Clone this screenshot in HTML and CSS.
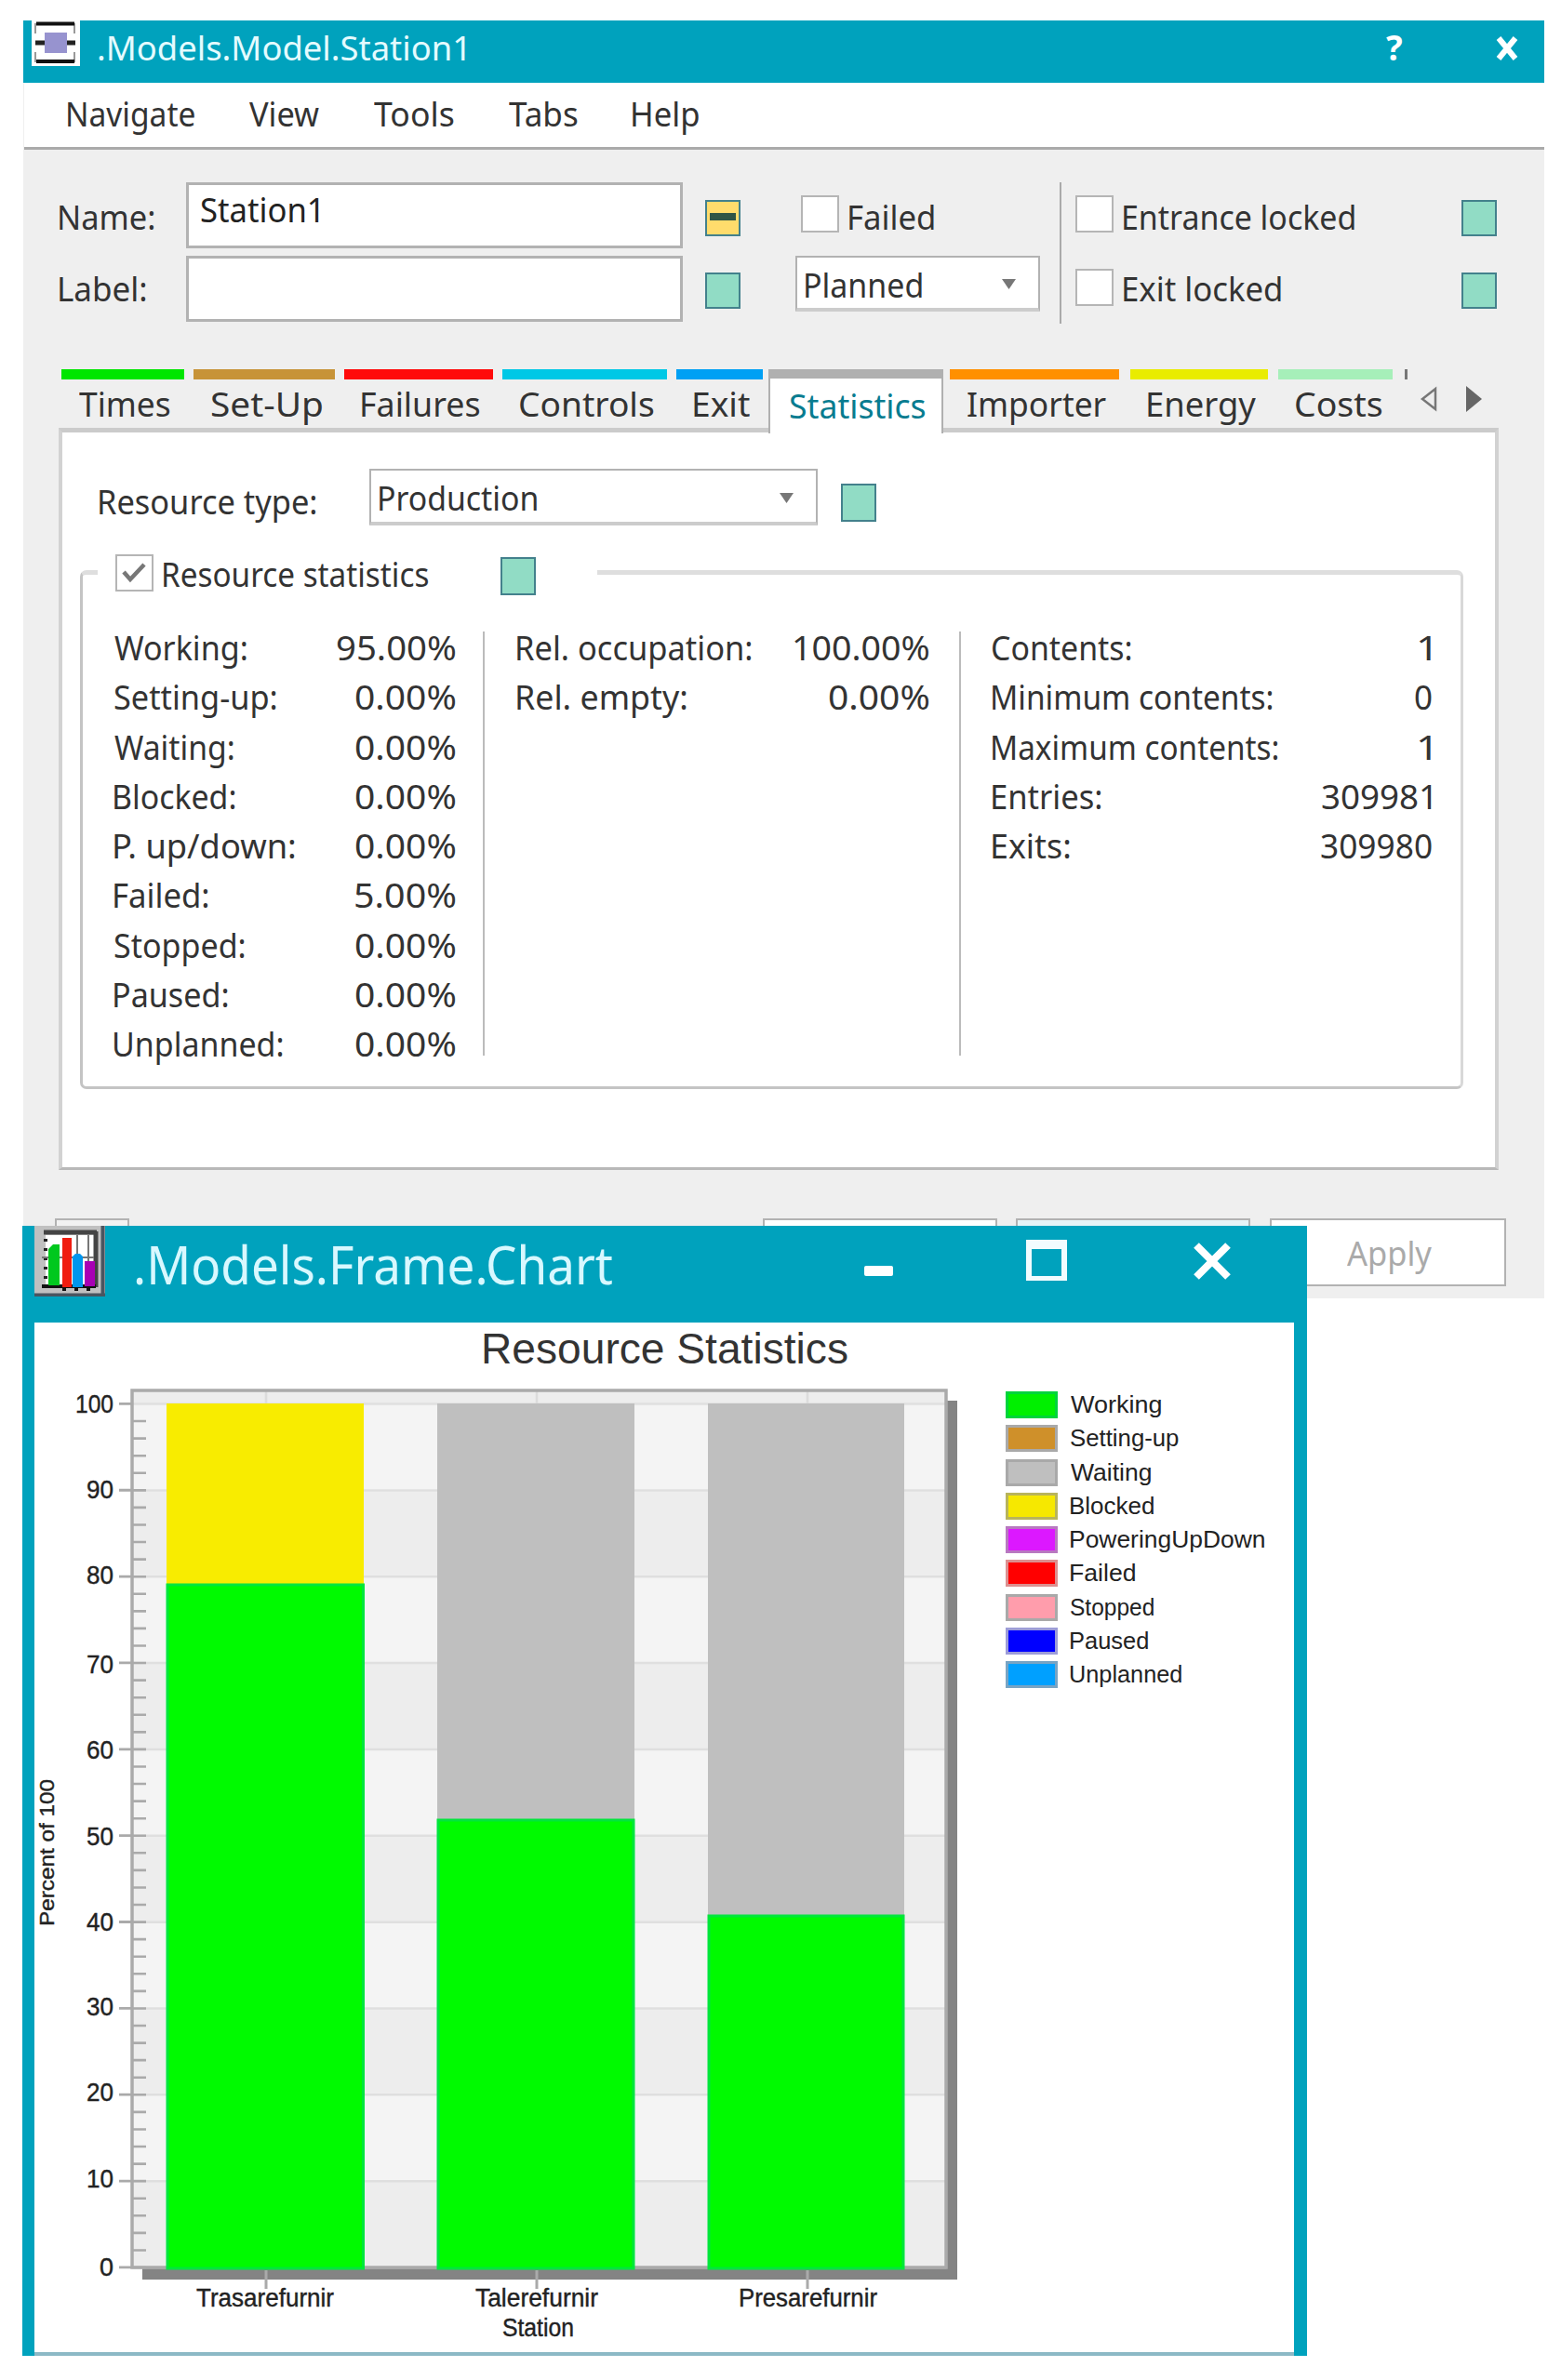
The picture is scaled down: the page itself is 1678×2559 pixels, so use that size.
FILE: index.html
```
<!DOCTYPE html>
<html lang="en">
<head>
<meta charset="utf-8">
<title>.Models.Model.Station1</title>
<link rel="stylesheet" href="styles.css">
</head>
<body>
<main class="desktop">
  <section class="window station">
    <header class="titlebar">
      <svg class="station-icon" viewBox="0 0 52 49"><rect width="52" height="49" fill="#fff"/><path d="M4 14V4H46V14M4 34V44H46V34" fill="none" stroke="#999" stroke-width="2"/><path d="M5 3.500H46M5 44H46" stroke="#111" stroke-width="4"/><path d="M4 24H47" stroke="#222" stroke-width="5"/><rect x="14" y="13" width="24" height="22" fill="#9793cf"/></svg>
      <span class="fit" data-w="394">.Models.Model.Station1</span>
      <div class="title-controls">
        <span class="fit help" data-w="17">?</span>
        <svg class="close-small" viewBox="0 0 26 26"><path d="M4 2L22 24M22 2L4 24" stroke="#fff" stroke-width="6"/></svg>
      </div>
    </header>
    <nav class="menu">
      <span class="fit" data-w="136">Navigate</span>
      <span class="fit" data-w="75">View</span>
      <span class="fit" data-w="86">Tools</span>
      <span class="fit" data-w="74">Tabs</span>
      <span class="fit" data-w="71">Help</span>
    </nav>

    <div class="head">
      <div class="labels">
        <span class="fit" data-w="102">Name:</span>
        <span class="fit" data-w="93">Label:</span>
      </div>
      <div class="inputs">
        <div class="input"><span class="fit" data-w="127">Station1</span></div>
        <div class="input"></div>
      </div>
      <div class="marks">
        <i class="mark differs"></i>
        <i class="mark"></i>
      </div>
      <div class="state">
        <div class="check-row indent"><i class="check"></i><span class="fit" data-w="91">Failed</span></div>
        <div class="select"><span class="fit" data-w="125">Planned</span><svg class="caret" viewBox="0 0 15 11"><path d="M0 0H15L7.500 11Z"/></svg></div>
      </div>
      <i class="head-rule"></i>
      <div class="locks">
        <div class="check-row"><i class="check"></i><span class="fit" data-w="248">Entrance locked</span></div>
        <div class="check-row"><i class="check low"></i><span class="fit" data-w="169">Exit locked</span></div>
      </div>
      <div class="marks flush">
        <i class="mark"></i>
        <i class="mark"></i>
      </div>
    </div>

    <div class="tabs">
      <div class="tab times"><span class="fit" data-w="98">Times</span></div>
      <div class="tab setup"><span class="fit" data-w="119">Set-Up</span></div>
      <div class="tab failures"><span class="fit" data-w="127">Failures</span></div>
      <div class="tab controls"><span class="fit" data-w="144">Controls</span></div>
      <div class="tab exit"><span class="fit" data-w="60">Exit</span></div>
      <div class="tab statistics"><span class="fit" data-w="146">Statistics</span></div>
      <div class="tab importer"><span class="fit" data-w="149">Importer</span></div>
      <div class="tab energy"><span class="fit" data-w="116">Energy</span></div>
      <div class="tab costs"><span class="fit" data-w="93">Costs</span></div>
      <i class="tab-stub"></i>
      <svg class="tab-scroll" viewBox="0 0 68 28"><path d="M17 3V25L3 14Z" fill="#eee" stroke="#777" stroke-width="2.500"/><path d="M50 0V28L67 14Z" fill="#666"/></svg>
    </div>

    <div class="panel">
      <div class="resource">
        <span class="fit" data-w="233">Resource type:</span>
        <div class="select wide"><span class="fit" data-w="169">Production</span><svg class="caret" viewBox="0 0 15 11"><path d="M0 0H15L7.500 11Z"/></svg></div>
        <i class="mark"></i>
      </div>
      <fieldset class="group">
        <legend class="legend-row">
          <span class="check ticked"><svg viewBox="0 0 26 22"><path d="M2 10L9 18L24 2" fill="none" stroke="#777" stroke-width="4.500"/></svg></span>
          <span class="fit" data-w="285">Resource statistics</span>
          <i class="mark"></i>
        </legend>
        <div class="stats">
          <div class="col portions">
            <div class="row"><span class="fit" data-w="142">Working:</span><span class="fit" data-w="127">95.00%</span></div>
            <div class="row"><span class="fit" data-w="174">Setting-up:</span><span class="fit" data-w="107">0.00%</span></div>
            <div class="row"><span class="fit" data-w="128">Waiting:</span><span class="fit" data-w="107">0.00%</span></div>
            <div class="row"><span class="fit" data-w="130">Blocked:</span><span class="fit" data-w="107">0.00%</span></div>
            <div class="row"><span class="fit" data-w="194">P. up/down:</span><span class="fit" data-w="107">0.00%</span></div>
            <div class="row"><span class="fit" data-w="101">Failed:</span><span class="fit" data-w="107">5.00%</span></div>
            <div class="row"><span class="fit" data-w="140">Stopped:</span><span class="fit" data-w="107">0.00%</span></div>
            <div class="row"><span class="fit" data-w="122">Paused:</span><span class="fit" data-w="107">0.00%</span></div>
            <div class="row"><span class="fit" data-w="181">Unplanned:</span><span class="fit" data-w="107">0.00%</span></div>
          </div>
          <i class="rule"></i>
          <div class="col occupation">
            <div class="row"><span class="fit" data-w="252">Rel. occupation:</span><span class="fit" data-w="144">100.00%</span></div>
            <div class="row"><span class="fit" data-w="182">Rel. empty:</span><span class="fit" data-w="107">0.00%</span></div>
          </div>
          <i class="rule"></i>
          <div class="col contents">
            <div class="row"><span class="fit" data-w="149">Contents:</span><span class="fit" data-w="13">1</span></div>
            <div class="row"><span class="fit" data-w="301">Minimum contents:</span><span class="fit" data-w="18">0</span></div>
            <div class="row"><span class="fit" data-w="307">Maximum contents:</span><span class="fit" data-w="13">1</span></div>
            <div class="row"><span class="fit" data-w="117">Entries:</span><span class="fit" data-w="118">309981</span></div>
            <div class="row"><span class="fit" data-w="83">Exits:</span><span class="fit" data-w="119">309980</span></div>
          </div>
        </div>
      </fieldset>
    </div>

    <footer class="buttons">
      <div class="button tiny"></div>
      <div class="button ok"></div>
      <div class="button cancel"></div>
      <div class="button apply"><span class="fit" data-w="91">Apply</span></div>
    </footer>
  </section>

  <section class="window chart">
    <header class="chart-bar">
      <svg class="chart-icon" viewBox="0 0 76 76"><rect width="76" height="76" fill="#c0c0c0"/><path d="M73.500 0V76M0 74.500H76" stroke="#4a5560" stroke-width="4"/><rect x="12" y="10" width="52" height="54" fill="#fff"/><path d="M10 7H67" stroke="#444" stroke-width="5"/><path d="M66 6V66" stroke="#444" stroke-width="5"/><path d="M12 14V62" stroke="#222" stroke-width="4" stroke-dasharray="3 7"/><path d="M46 10V64M58 10V64M8 34H64" stroke="#777" stroke-width="2"/><path d="M8 65H66" stroke="#111" stroke-width="4"/><path d="M32 66V70M45 66V70M58 66V70" stroke="#111" stroke-width="4"/><path d="M15 64V25L20 20H27V64Z" fill="#00c81e"/><rect x="30" y="13" width="10" height="53" fill="#f01c10"/><path d="M41 66V33L44 30H49L52 33V66Z" fill="#0096ee"/><rect x="54" y="38" width="11" height="27" fill="#a800b4"/></svg>
      <span class="fit chart-name" data-w="511">.Models.Frame.Chart</span>
      <svg class="controls-icons" viewBox="0 0 396 48"><rect x="2" y="30" width="31" height="11" rx="2" fill="#fff"/><path d="M176 2H220V46H176ZM182 12V41H214V12Z" fill="#f2fcff" fill-rule="evenodd"/><path d="M359 8L393 42M393 8L359 42" stroke="#fff" stroke-width="8"/></svg>
    </header>
    <div class="chart-body">
      <svg class="plot" viewBox="37 1422 1044 1107">
        <text class="chart-title" x="517" y="1466" textLength="395" lengthAdjust="spacingAndGlyphs">Resource Statistics</text>
        <path d="M153 2445H1028M1023 1506V2451" stroke="#848484" stroke-width="12"/>
        <rect x="142" y="1494" width="875" height="945" fill="#f4f4f4"/>
        <path d="M142 1502H1017" stroke="#ededed" stroke-width="15"/>
        <path d="M579.500 2438V1509" stroke="#ededed" stroke-width="875" stroke-dasharray="92.850"/>
        <path d="M579.500 2439.300V1500" stroke="#dfdfdf" stroke-width="875" stroke-dasharray="2.500 90.350"/>
        <path d="M286 1494V2438M577 1494V2438M868 1494V2438" stroke="#dcdcdc" stroke-width="2.500"/>
        <path d="M134.500 2439.300V1500" stroke="#aaa" stroke-width="13" stroke-dasharray="2.800 90.050"/>
        <path d="M149.500 2439.300V1515" stroke="#aaa" stroke-width="15" stroke-dasharray="2.600 15.970"/>
        <path d="M142 1495H1017V2438H142Z" fill="none" stroke="#aaa" stroke-width="3.500"/>
        <rect x="179" y="1509" width="212" height="194" fill="#f8ec00"/>
        <rect x="470" y="1509" width="212" height="447" fill="#bfbfbf"/>
        <rect x="761" y="1509" width="211" height="550" fill="#bfbfbf"/>
        <g fill="#00fa00" stroke="#00e63c" stroke-width="3">
          <rect x="180" y="1704" width="210.500" height="735"/>
          <rect x="471" y="1957" width="210" height="482"/>
          <rect x="762" y="2060" width="209" height="379"/>
        </g>
        <path d="M286 2441V2461M577 2441V2461M868 2441V2461" stroke="#aaa" stroke-width="3"/>
        <g class="small end">
          <text x="122" y="1519" textLength="41" lengthAdjust="spacingAndGlyphs">100</text>
          <text x="122" y="1611" textLength="29" lengthAdjust="spacingAndGlyphs">90</text>
          <text x="122" y="1703" textLength="29" lengthAdjust="spacingAndGlyphs">80</text>
          <text x="122" y="1799" textLength="29" lengthAdjust="spacingAndGlyphs">70</text>
          <text x="122" y="1891" textLength="29" lengthAdjust="spacingAndGlyphs">60</text>
          <text x="122" y="1984" textLength="29" lengthAdjust="spacingAndGlyphs">50</text>
          <text x="122" y="2076" textLength="29" lengthAdjust="spacingAndGlyphs">40</text>
          <text x="122" y="2167" textLength="29" lengthAdjust="spacingAndGlyphs">30</text>
          <text x="122" y="2259" textLength="29" lengthAdjust="spacingAndGlyphs">20</text>
          <text x="122" y="2352" textLength="29" lengthAdjust="spacingAndGlyphs">10</text>
          <text x="122" y="2447" textLength="15" lengthAdjust="spacingAndGlyphs">0</text>
        </g>
        <g class="small">
          <text x="211" y="2480" textLength="148" lengthAdjust="spacingAndGlyphs">Trasarefurnir</text>
          <text x="511" y="2480" textLength="132" lengthAdjust="spacingAndGlyphs">Talerefurnir</text>
          <text x="794" y="2480" textLength="149" lengthAdjust="spacingAndGlyphs">Presarefurnir</text>
          <text x="540" y="2512" textLength="77" lengthAdjust="spacingAndGlyphs">Station</text>
          <text class="axis-name" transform="translate(58 2071) rotate(-90)" textLength="158" lengthAdjust="spacingAndGlyphs">Percent of 100</text>
        </g>
      </svg>
      <div class="key">
        <div class="key-row"><i class="swatch working"></i><span class="fit" data-w="97">Working</span></div>
        <div class="key-row"><i class="swatch setting"></i><span class="fit" data-w="116">Setting-up</span></div>
        <div class="key-row"><i class="swatch waiting"></i><span class="fit" data-w="86">Waiting</span></div>
        <div class="key-row"><i class="swatch blocked"></i><span class="fit" data-w="89">Blocked</span></div>
        <div class="key-row"><i class="swatch powering"></i><span class="fit" data-w="208">PoweringUpDown</span></div>
        <div class="key-row"><i class="swatch failed"></i><span class="fit" data-w="69">Failed</span></div>
        <div class="key-row"><i class="swatch stopped"></i><span class="fit" data-w="89">Stopped</span></div>
        <div class="key-row"><i class="swatch paused"></i><span class="fit" data-w="83">Paused</span></div>
        <div class="key-row"><i class="swatch unplanned"></i><span class="fit" data-w="119">Unplanned</span></div>
      </div>
    </div>
  </section>
</main>
<script src="fit.js"></script>
</body>
</html>
```
FILE: styles.css
```
* { box-sizing: border-box; }
body { margin: 0; background: #fff; color: #333; font-family: "Noto Sans", sans-serif; font-size: 37px; line-height: 50px; }
i { display: block; flex: none; }
svg { display: block; flex: none; }
.desktop { position: relative; width: 1678px; height: 2559px; overflow: hidden; }
.fit { display: block; flex: none; white-space: nowrap; transform-origin: 0 50%; }

.window { position: absolute; }
.station { left: 25px; top: 22px; width: 1635px; height: 1374px; padding-left: 1px; background: #efefef; }
.titlebar { display: flex; gap: 19px; height: 67px; margin-left: -1px; padding: 0 27px 0 9px; background: #00a2bd; color: #e4fbff; }
.titlebar .fit { position: static; padding-top: 4px; }
.station-icon { width: 52px; height: 49px; }
.title-controls { display: flex; gap: 101px; margin-left: auto; color: #fff; font-weight: 700; }
.close-small { width: 26px; height: 26px; margin-top: 17px; }
.menu { display: flex; gap: 59px; height: 72px; padding: 8px 0 0 46px; background: #fff; border-bottom: 3px solid #aaa; }

.head { display: flex; height: 187px; padding: 35px 0 0 37px; }
.labels { width: 137px; padding-top: 12px; display: flex; flex-direction: column; gap: 27px; align-items: flex-start; }
.inputs { width: 534px; }
.input { height: 71px; margin-bottom: 8px; padding: 1px 12px; display: flex; border: 3px solid #b2b2b2; background: #fff; color: #222; }
.marks { display: flex; flex-direction: column; gap: 39px; padding-top: 19px; margin-left: 24px; }
.marks.flush { margin-left: 0; }
.mark { width: 38px; height: 39px; background: #91dcc5; border: 2.5px solid #43818c; }
.differs { padding: 12px 3px; background: #ffdc6c; }
.differs::before { content: ""; display: block; height: 8px; background: #2f5546; }
.state { width: 263px; margin-left: 59px; padding-top: 12px; }
.check-row { display: flex; gap: 10px; height: 50px; }
.check-row.indent { padding-left: 6px; margin-bottom: 17px; }
.check { width: 41px; height: 40px; margin-top: 2px; border: 2.5px solid #b5b5b5; background: #fff; }
.check.low { margin-top: 4px; }
.select { display: flex; justify-content: space-between; width: 263px; height: 60px; padding: 4px 24px 0 8px; border: 2px solid #b2b2b2; border-bottom: 4px solid #ccc; background: #fff; }
.caret { width: 15px; height: 11px; margin-top: 19px; fill: #777; }
.head-rule { width: 2px; height: 152px; margin-left: 21px; background: #aaa; }
.locks { width: 415px; margin-left: 15px; padding-top: 12px; display: flex; flex-direction: column; gap: 27px; }

.tabs { display: flex; height: 63px; margin-top: 49px; padding-left: 40px; }
.tab { flex: none; height: 63px; margin-right: 10px; padding: 1px 0 0 18px; border-top: 11px solid; }
.times { width: 132px; border-color: #00e600; }
.setup { width: 152px; border-color: #c79337; }
.failures { width: 160px; border-color: #ff0a0a; }
.controls { width: 177px; border-color: #00c8e6; }
.exit { width: 93px; margin-right: 6px; border-color: #00a0f4; }
.tab.statistics { position: relative; width: 188px; height: 69px; margin-right: 7px; padding: 4px 0 0 20px; background: #fff; color: #087c90; border: 2px solid #b0b0b0; border-top-width: 10px; border-bottom: 0; }
.importer { width: 182px; margin-right: 12px; border-color: #ff9000; }
.energy { width: 148px; margin-right: 11px; border-color: #e9ec00; }
.costs { width: 123px; margin-right: 13px; border-color: #a6efb9; }
.tab-stub { width: 3px; height: 11px; background: #777; }
.tab-scroll { width: 68px; height: 28px; margin: 18px 0 0 13px; }

.panel { width: 1548px; height: 798px; margin-left: 37px; padding: 39px 34px 0 19px; background: #fff; border: 4px solid #d2d2d2; border-top: 5px solid #cbcbcb; border-bottom: 3px solid #b8b8b8; }
.resource { display: flex; height: 61px; padding-left: 20px; }
.resource > .fit { margin-top: 10px; }
.wide { width: 482px; height: 61px; margin-left: 58px; padding-top: 4px; }
.wide .caret { margin-top: 20px; }
.resource .mark { margin: 16px 0 0 25px; height: 41px; }
.group { width: 1487px; height: 581px; margin: 25px 0 0; padding: 31px 0 0 16px; border: 3px solid #c4c4c4; border-top: 5px solid #dedede; border-right-color: #d8d8d8; border-radius: 7px; }
.legend-row { display: flex; width: 537px; height: 50px; padding: 2px 0 0 19px; }
.legend-row .check { margin: 4px 10px 0 0; padding: 7px 5px; }
.ticked svg { width: 26px; height: 22px; }
.legend-row .mark { margin: 7px 0 0 78px; height: 41px; }
.stats { display: flex; height: 490px; }
.row { display: flex; justify-content: space-between; height: 53.3px; }
.portions { width: 366px; margin-left: 17px; }
.rule { width: 2px; height: 456px; margin: 8px 34px 0 31px; background: #bbb; }
.occupation { width: 442px; }
.occupation + .rule { margin: 8px 33px 0 34px; }
.contents { width: 472px; }

.buttons { display: flex; padding: 52px 0 0 33px; }
.button { height: 73px; border: 2px solid #b2b2b2; background: #fff; }
.tiny { width: 80px; margin-right: 681px; background: #f2f2f2; }
.ok { width: 252px; margin-right: 20px; }
.cancel { width: 252px; margin-right: 21px; background: #e6f4f7; }
.apply { width: 254px; padding: 10px 0 0 80px; color: #aaa; }

.chart { left: 24px; top: 1318px; width: 1381px; height: 1215px; background: #fff; border: 0 solid #00a2bd; border-width: 0 14px 0 13px; }
.chart::after { content: ""; display: block; height: 4px; background: #8cb9c6; }
.chart-bar { display: flex; height: 104px; margin: 0 -14px 0 -13px; padding-left: 13px; background: #00a2bd; color: #d8f8ff; font-size: 56px; line-height: 76px; }
.chart-icon { width: 76px; height: 76px; margin-right: 33px; }
.chart-name { padding-top: 3px; }
.controls-icons { width: 396px; height: 48px; margin: 13px 0 0 270px; }
.chart-body { display: flex; height: 1107px; font-family: "Liberation Sans", sans-serif; color: #222; }
.plot { width: 1044px; height: 1107px; }
.chart-title { font-size: 46px; fill: #333; }
.small { font-size: 27px; fill: #222; stroke: #222; stroke-width: .4px; }
.end { text-anchor: end; font-size: 28px; }
.axis-name { font-size: 22px; }
.key { padding-top: 74px; font-size: 26px; line-height: 29px; }
.key-row { display: flex; gap: 13px; height: 36.3px; }
.swatch { width: 56px; height: 29px; border: 3px solid #a9a9a9; }
.working { background: #00f000; border-color: #00d43c; }
.setting { background: #cf902a; }
.waiting { background: #bfbfbf; }
.blocked { background: #f6e800; border-color: #b8b45c; }
.powering { background: #dc18ff; border-color: #b878c0; }
.failed { background: #f00; border-color: #dc9090; }
.stopped { background: #ff9dac; }
.paused { background: #00f; border-color: #9c9cd8; }
.unplanned { background: #00a0ff; border-color: #78a4c4; }
```
FILE: fit.js
```
// Condenses each label horizontally so that its inked width equals data-w.
const ctx = document.createElement("canvas").getContext("2d");
document.querySelectorAll(".fit").forEach((el) => {
  const style = getComputedStyle(el);
  ctx.font = style.fontWeight + " " + style.fontSize + " " + style.fontFamily;
  const m = ctx.measureText(el.textContent);
  const target = Number(el.dataset.w);
  const scale = target / (m.actualBoundingBoxLeft + m.actualBoundingBoxRight);
  const lead = m.actualBoundingBoxLeft * scale + 1;
  el.style.width = m.width + "px";
  el.style.transform = "scaleX(" + scale + ")";
  el.style.marginLeft = lead + "px";
  el.style.marginRight = target - m.width - lead + "px";
});
```
